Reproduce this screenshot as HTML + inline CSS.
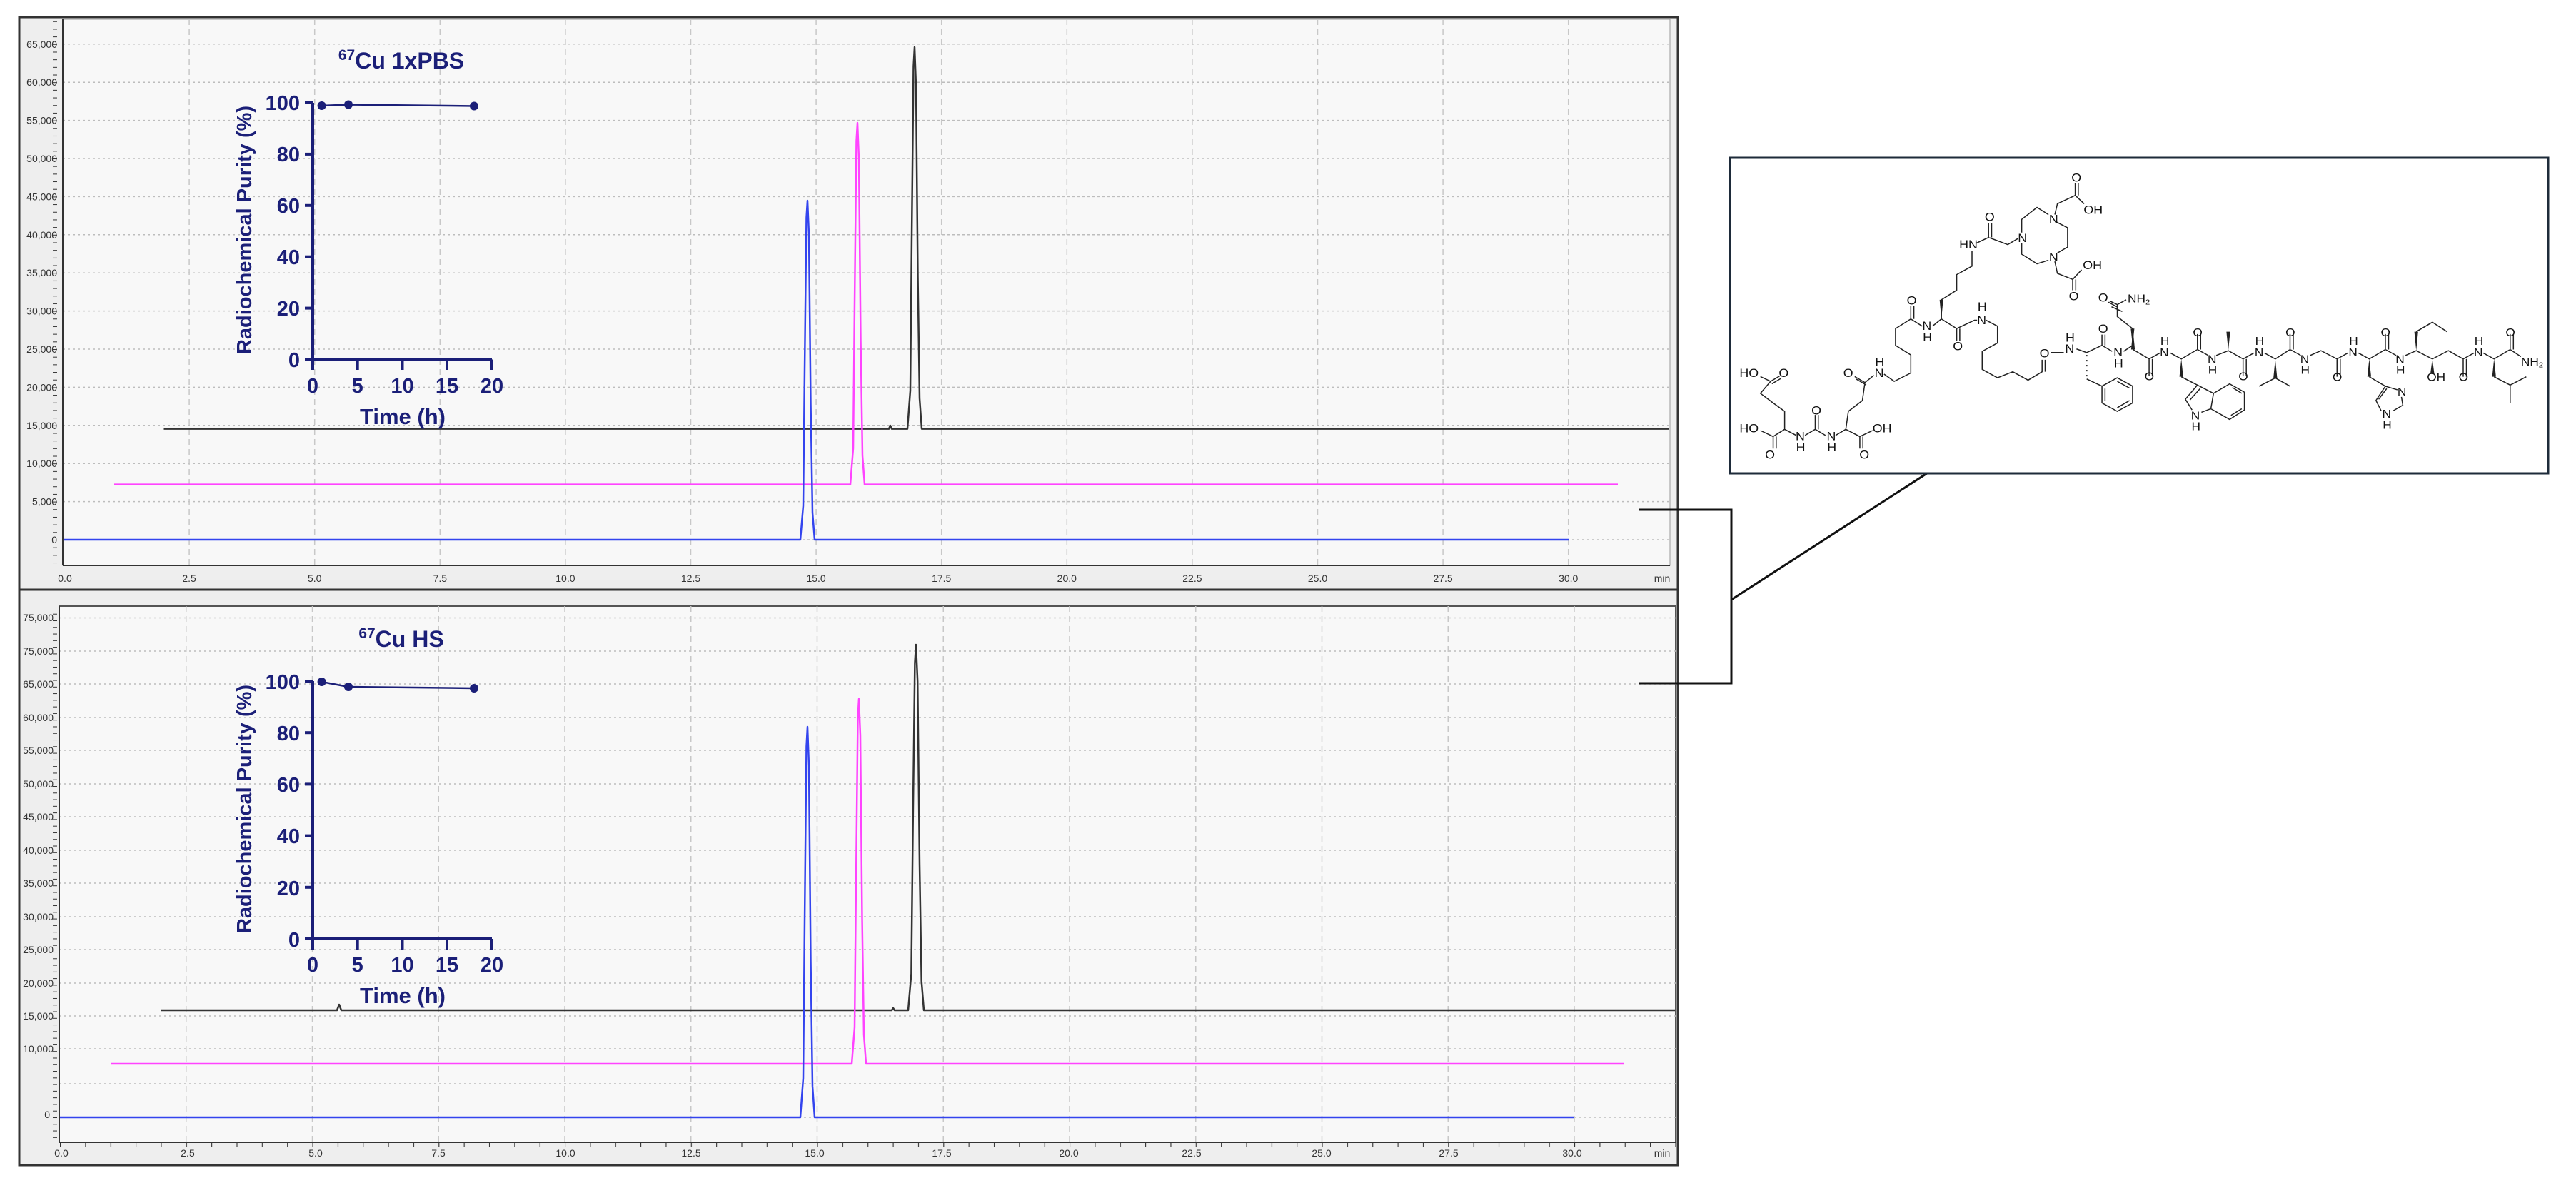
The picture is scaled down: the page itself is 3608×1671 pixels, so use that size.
<!DOCTYPE html>
<html><head><meta charset="utf-8"><style>
html,body{margin:0;padding:0;background:#fff;}
svg{display:block;}
.ax{font-family:"Liberation Sans",sans-serif;font-size:14px;fill:#333;}
.nv{font-family:"Liberation Sans",sans-serif;font-weight:bold;fill:#1b1f78;}
.m text{font-family:"Liberation Sans",sans-serif;fill:#111;}
</style></head><body>
<svg width="3608" height="1671" viewBox="0 0 3608 1671" xmlns="http://www.w3.org/2000/svg">
<defs>
<pattern id="yt1" x="0" y="756" width="20" height="10.68" patternUnits="userSpaceOnUse"><line x1="14" y1="0.5" x2="20" y2="0.5" stroke="#333" stroke-width="1"/></pattern>
<pattern id="xt1" x="89.5" y="0" width="35.12" height="20" patternUnits="userSpaceOnUse"><line x1="0.5" y1="0" x2="0.5" y2="6" stroke="#333" stroke-width="1.2"/></pattern>
<pattern id="yt2" x="0" y="1565" width="20" height="9.28" patternUnits="userSpaceOnUse"><line x1="14" y1="0.5" x2="20" y2="0.5" stroke="#333" stroke-width="1"/></pattern>
<pattern id="xt2" x="84" y="0" width="35.35" height="20" patternUnits="userSpaceOnUse"><line x1="0.5" y1="0" x2="0.5" y2="6" stroke="#333" stroke-width="1.2"/></pattern>
</defs>

<!-- TOP PANEL -->
<rect x="27" y="24" width="2323" height="802" fill="#eeeeee" stroke="#333" stroke-width="3"/>
<rect x="88" y="27" width="2251" height="765" fill="#f8f8f8" stroke="#999" stroke-width="1"/>
<g stroke="#bdbdbd" stroke-width="1.5" stroke-dasharray="3 4">
<line x1="88" x2="2339" y1="756" y2="756"/><line x1="88" x2="2339" y1="702.6" y2="702.6"/><line x1="88" x2="2339" y1="649.2" y2="649.2"/><line x1="88" x2="2339" y1="595.8" y2="595.8"/><line x1="88" x2="2339" y1="542.4" y2="542.4"/><line x1="88" x2="2339" y1="489" y2="489"/><line x1="88" x2="2339" y1="435.6" y2="435.6"/><line x1="88" x2="2339" y1="382.2" y2="382.2"/><line x1="88" x2="2339" y1="328.8" y2="328.8"/><line x1="88" x2="2339" y1="275.4" y2="275.4"/><line x1="88" x2="2339" y1="222" y2="222"/><line x1="88" x2="2339" y1="168.6" y2="168.6"/><line x1="88" x2="2339" y1="115.2" y2="115.2"/><line x1="88" x2="2339" y1="61.8" y2="61.8"/>
</g>
<g stroke="#c8c8c8" stroke-width="1.5" stroke-dasharray="8 6">
<line y1="27" y2="792" x1="265.1" x2="265.1"/><line y1="27" y2="792" x1="440.7" x2="440.7"/><line y1="27" y2="792" x1="616.3" x2="616.3"/><line y1="27" y2="792" x1="791.9" x2="791.9"/><line y1="27" y2="792" x1="967.5" x2="967.5"/><line y1="27" y2="792" x1="1143.1" x2="1143.1"/><line y1="27" y2="792" x1="1318.7" x2="1318.7"/><line y1="27" y2="792" x1="1494.3" x2="1494.3"/><line y1="27" y2="792" x1="1669.9" x2="1669.9"/><line y1="27" y2="792" x1="1845.5" x2="1845.5"/><line y1="27" y2="792" x1="2021.1" x2="2021.1"/><line y1="27" y2="792" x1="2196.7" x2="2196.7"/>
</g>
<rect x="68" y="27" width="20" height="765" fill="url(#yt1)"/>
<rect x="88" y="792" width="2251" height="8" fill="url(#xt1)"/>
<line x1="88" y1="27" x2="88" y2="792" stroke="#333" stroke-width="2"/>
<line x1="88" y1="792" x2="2339" y2="792" stroke="#333" stroke-width="2"/>
<g class="ax" text-anchor="end">
<text x="80" y="761">0</text><text x="80" y="707.6">5,000</text><text x="80" y="654.2">10,000</text><text x="80" y="600.8">15,000</text><text x="80" y="547.4">20,000</text><text x="80" y="494">25,000</text><text x="80" y="440.6">30,000</text><text x="80" y="387.2">35,000</text><text x="80" y="333.8">40,000</text><text x="80" y="280.4">45,000</text><text x="80" y="227">50,000</text><text x="80" y="173.6">55,000</text><text x="80" y="120.2">60,000</text><text x="80" y="66.8">65,000</text>
</g>
<g class="ax" text-anchor="middle">
<text x="91" y="815">0.0</text><text x="265.1" y="815">2.5</text><text x="440.7" y="815">5.0</text><text x="616.3" y="815">7.5</text><text x="791.9" y="815">10.0</text><text x="967.5" y="815">12.5</text><text x="1143.1" y="815">15.0</text><text x="1318.7" y="815">17.5</text><text x="1494.3" y="815">20.0</text><text x="1669.9" y="815">22.5</text><text x="1845.5" y="815">25.0</text><text x="2021.1" y="815">27.5</text><text x="2196.7" y="815">30.0</text><text x="2328" y="815">min</text>
</g>
<g fill="none" stroke-width="2.5" stroke-linejoin="round">
<path stroke="#333" d="M229.5 600.6 L1245 600.6 L1247 596 L1249 600.6 L1271 600.6 L1275 547 L1277 333 L1279.5 92.7 L1281 66 L1283 119.5 L1285.5 386.8 L1288 557.8 L1291 600.6 L2338 600.6"/>
<path stroke="#ff44ff" d="M160 678.6 L1191 678.6 L1195 628 L1197 425.3 L1199.5 197.3 L1201 172 L1203 222.7 L1205.5 476 L1208 638 L1211 678.6 L2266 678.6"/>
<path stroke="#3344ee" d="M89.5 756 L1121 756 L1125 708.5 L1127 518.5 L1129.5 304.8 L1131 281 L1133 328.5 L1135.5 566 L1138 718 L1141 756 L2197 756"/>
</g>
<!-- inset top -->
<g>
<text class="nv" x="562" y="96" text-anchor="middle" font-size="32"><tspan font-size="21" dy="-12">67</tspan><tspan dy="12">Cu 1xPBS</tspan></text>
<path d="M438 144 L438 503.5 L689 503.5" fill="none" stroke="#1b1f78" stroke-width="4"/>
<g stroke="#1b1f78" stroke-width="4">
<line x1="427" x2="438" y1="503.5" y2="503.5"/><line x1="427" x2="438" y1="431.6" y2="431.6"/><line x1="427" x2="438" y1="359.7" y2="359.7"/><line x1="427" x2="438" y1="287.8" y2="287.8"/><line x1="427" x2="438" y1="215.9" y2="215.9"/><line x1="427" x2="438" y1="144" y2="144"/>
<line x1="438" x2="438" y1="503.5" y2="518"/><line x1="500.7" x2="500.7" y1="503.5" y2="518"/><line x1="563.5" x2="563.5" y1="503.5" y2="518"/><line x1="626" x2="626" y1="503.5" y2="518"/><line x1="689" x2="689" y1="503.5" y2="518"/>
</g>
<polyline points="450.6,148 488,146.5 664,148.5" fill="none" stroke="#1b1f78" stroke-width="2.5"/>
<g fill="#1b1f78"><circle cx="450.6" cy="148" r="6"/><circle cx="488" cy="146.5" r="6"/><circle cx="664" cy="148.5" r="6"/></g>
<g class="nv" font-size="29" text-anchor="end"><text x="420" y="514">0</text><text x="420" y="442">20</text><text x="420" y="370">40</text><text x="420" y="298">60</text><text x="420" y="226">80</text><text x="420" y="154">100</text></g>
<g class="nv" font-size="29" text-anchor="middle"><text x="438" y="550">0</text><text x="500.7" y="550">5</text><text x="563.5" y="550">10</text><text x="626" y="550">15</text><text x="689" y="550">20</text></g>
<text class="nv" x="564" y="594" font-size="31" text-anchor="middle">Time (h)</text>
<text class="nv" font-size="29" text-anchor="middle" transform="translate(352,322) rotate(-90)">Radiochemical Purity (%)</text>
</g>

<!-- BOTTOM PANEL -->
<rect x="27" y="826" width="2323" height="806" fill="#eeeeee" stroke="#333" stroke-width="3"/>
<rect x="83" y="849" width="2264" height="751" fill="#f8f8f8" stroke="#555" stroke-width="2"/>
<g stroke="#bdbdbd" stroke-width="1.5" stroke-dasharray="3 4">
<line x1="83" x2="2347" y1="865.5" y2="865.5"/><line x1="83" x2="2347" y1="912" y2="912"/><line x1="83" x2="2347" y1="958" y2="958"/><line x1="83" x2="2347" y1="1005" y2="1005"/><line x1="83" x2="2347" y1="1051" y2="1051"/><line x1="83" x2="2347" y1="1098" y2="1098"/><line x1="83" x2="2347" y1="1144" y2="1144"/><line x1="83" x2="2347" y1="1191" y2="1191"/><line x1="83" x2="2347" y1="1237" y2="1237"/><line x1="83" x2="2347" y1="1284" y2="1284"/><line x1="83" x2="2347" y1="1330" y2="1330"/><line x1="83" x2="2347" y1="1377" y2="1377"/><line x1="83" x2="2347" y1="1423" y2="1423"/><line x1="83" x2="2347" y1="1469" y2="1469"/><line x1="83" x2="2347" y1="1518" y2="1518"/><line x1="83" x2="2347" y1="1565" y2="1565"/>
</g>
<g stroke="#c8c8c8" stroke-width="1.5" stroke-dasharray="8 6">
<line y1="849" y2="1600" x1="260.75" x2="260.75"/><line y1="849" y2="1600" x1="437.5" x2="437.5"/><line y1="849" y2="1600" x1="614.25" x2="614.25"/><line y1="849" y2="1600" x1="791" x2="791"/><line y1="849" y2="1600" x1="967.75" x2="967.75"/><line y1="849" y2="1600" x1="1144.5" x2="1144.5"/><line y1="849" y2="1600" x1="1321.25" x2="1321.25"/><line y1="849" y2="1600" x1="1498" x2="1498"/><line y1="849" y2="1600" x1="1674.75" x2="1674.75"/><line y1="849" y2="1600" x1="1851.5" x2="1851.5"/><line y1="849" y2="1600" x1="2028.25" x2="2028.25"/><line y1="849" y2="1600" x1="2205" x2="2205"/>
</g>
<rect x="63" y="851" width="20" height="749" fill="url(#yt2)"/>
<rect x="83" y="1600" width="2264" height="8" fill="url(#xt2)"/>
<line x1="83" y1="849" x2="83" y2="1600" stroke="#333" stroke-width="2"/>
<line x1="83" y1="1600" x2="2347" y2="1600" stroke="#333" stroke-width="2"/>
<g class="ax" text-anchor="end">
<text x="75" y="870">75,000</text><text x="75" y="917">75,000</text><text x="75" y="963">65,000</text><text x="75" y="1010">60,000</text><text x="75" y="1056">55,000</text><text x="75" y="1103">50,000</text><text x="75" y="1149">45,000</text><text x="75" y="1196">40,000</text><text x="75" y="1242">35,000</text><text x="75" y="1289">30,000</text><text x="75" y="1335">25,000</text><text x="75" y="1382">20,000</text><text x="75" y="1428">15,000</text><text x="75" y="1474">10,000</text><text x="70" y="1566">0</text>
</g>
<g class="ax" text-anchor="middle">
<text x="86" y="1620">0.0</text><text x="263" y="1620">2.5</text><text x="442" y="1620">5.0</text><text x="614" y="1620">7.5</text><text x="792" y="1620">10.0</text><text x="968" y="1620">12.5</text><text x="1141" y="1620">15.0</text><text x="1319" y="1620">17.5</text><text x="1497" y="1620">20.0</text><text x="1669" y="1620">22.5</text><text x="1851" y="1620">25.0</text><text x="2029" y="1620">27.5</text><text x="2202" y="1620">30.0</text><text x="2328" y="1620">min</text>
</g>
<g fill="none" stroke-width="2.5" stroke-linejoin="round">
<path stroke="#333" d="M226 1415 L472 1415 L475 1407 L478 1415 L1249 1415 L1251 1412 L1253 1415 L1272 1415 L1276.4 1363.8 L1278.6 1159 L1281.4 928.6 L1283 903 L1285.2 954.2 L1288 1210.2 L1290.7 1374 L1294 1415 L2346 1415"/>
<path stroke="#ff44ff" d="M155 1490 L1193 1490 L1197 1438.9 L1199 1234.5 L1201.5 1004.6 L1203 979 L1205 1030.1 L1207.5 1285.6 L1210 1449.1 L1213 1490 L2275 1490"/>
<path stroke="#3344ee" d="M84 1565 L1121 1565 L1125 1510.3 L1127 1291.5 L1129.5 1045.4 L1131 1018 L1133 1072.7 L1135.5 1346.2 L1138 1521.2 L1141 1565 L2205 1565"/>
</g>
<!-- inset bottom -->
<g>
<text class="nv" x="562" y="906" text-anchor="middle" font-size="32"><tspan font-size="21" dy="-12">67</tspan><tspan dy="12">Cu HS</tspan></text>
<path d="M438 954 L438 1315 L689 1315" fill="none" stroke="#1b1f78" stroke-width="4"/>
<g stroke="#1b1f78" stroke-width="4">
<line x1="427" x2="438" y1="1315" y2="1315"/><line x1="427" x2="438" y1="1242.8" y2="1242.8"/><line x1="427" x2="438" y1="1170.6" y2="1170.6"/><line x1="427" x2="438" y1="1098.4" y2="1098.4"/><line x1="427" x2="438" y1="1026.2" y2="1026.2"/><line x1="427" x2="438" y1="954" y2="954"/>
<line x1="438" x2="438" y1="1315" y2="1330"/><line x1="500.7" x2="500.7" y1="1315" y2="1330"/><line x1="563.5" x2="563.5" y1="1315" y2="1330"/><line x1="626" x2="626" y1="1315" y2="1330"/><line x1="689" x2="689" y1="1315" y2="1330"/>
</g>
<polyline points="450.6,955 488,962 664,964" fill="none" stroke="#1b1f78" stroke-width="2.5"/>
<g fill="#1b1f78"><circle cx="450.6" cy="955" r="6"/><circle cx="488" cy="962" r="6"/><circle cx="664" cy="964" r="6"/></g>
<g class="nv" font-size="29" text-anchor="end"><text x="420" y="1326">0</text><text x="420" y="1254">20</text><text x="420" y="1181">40</text><text x="420" y="1109">60</text><text x="420" y="1037">80</text><text x="420" y="965">100</text></g>
<g class="nv" font-size="29" text-anchor="middle"><text x="438" y="1361">0</text><text x="500.7" y="1361">5</text><text x="563.5" y="1361">10</text><text x="626" y="1361">15</text><text x="689" y="1361">20</text></g>
<text class="nv" x="564" y="1405" font-size="31" text-anchor="middle">Time (h)</text>
<text class="nv" font-size="29" text-anchor="middle" transform="translate(352,1133) rotate(-90)">Radiochemical Purity (%)</text>
</g>

<!-- connectors -->
<g stroke="#111" stroke-width="3" fill="none">
<path d="M2295 714 L2425 714 L2425 957 L2295 957"/>
<line x1="2425" y1="840" x2="2699" y2="663"/>
</g>
<rect x="2423" y="221" width="1146" height="442" fill="#fff" stroke="#1e2b3a" stroke-width="3"/>

<!-- molecule left part -->
<g class="m" transform="translate(2430,225) scale(0.357,0.336)">
<g fill="none" stroke="#222" stroke-width="1.5" vector-effect="non-scaling-stroke" stroke-linejoin="round">
<path vector-effect="non-scaling-stroke" d="M100 900 L140 920 L100 970 L150 1010 L195 1045 L195 1120 L150 1150 L100 1125 M150 1150 L150 1200 M162 1150 L162 1200 M140 920 L175 898 M145 930 L180 908 M195 1120 L240 1145 M275 1145 L315 1120 L355 1145 M315 1120 L315 1060 M327 1120 L327 1060 M395 1145 L435 1120 L490 1150 L540 1125 M490 1150 L490 1200 M502 1150 L502 1200 M435 1120 L445 1045 L500 1000 L510 925 L470 900 M515 935 L475 910 M510 925 L545 895 M585 890 L625 920 L690 885 L690 810 L630 770 L630 700 L690 660 L690 605 M702 660 L702 605 M690 660 L735 690 M775 690 L810 660 L870 700 L870 750 M882 700 L882 750 M870 700 L940 665 L950 665 M985 665 L1030 690 L1030 760 L970 795 L970 870 L1030 905 L1090 880 L1150 915 L1205 880 L1205 830 M1217 880 L1217 830 M1240 800 L1290 800 M1340 785 L1380 800 L1440 770 L1440 725 M1452 770 L1452 725 M1440 770 L1480 795 M1525 795 L1560 770 L1560 700 L1500 650 L1500 600 L1470 585 M1500 610 L1465 590 M1500 600 L1535 580 M810 660 L810 580 L870 540 L870 475 L930 440 L930 375 M945 345 L995 320 L995 260 M1007 320 L1007 260 M995 320 L1070 350 L1110 325 M1125 300 L1125 245 L1185 195 L1230 225 M1260 255 L1305 280 L1305 360 L1265 385 M1230 415 L1185 430 L1125 390 L1125 345 M1255 225 L1265 180 L1335 145 L1335 95 M1347 145 L1347 95 M1335 145 L1370 180 M1255 420 L1265 470 L1325 495 L1325 540 M1337 495 L1337 540 M1325 495 L1360 455"/>
<path vector-effect="non-scaling-stroke" d="M1440 940 L1500 905 L1560 940 L1560 1010 L1500 1045 L1440 1010 Z M1452 950 L1452 1000 M1500 1030 L1548 1000 M1500 920 L1548 948 M1380 910 L1440 940"/>
</g>
<path d="M810 660 L803 580 L817 580 Z M1560 770 L1553 700 L1567 700 Z" fill="#222"/>
<path d="M1380 810 L1380 905" stroke="#222" stroke-width="2" stroke-dasharray="2 5" vector-effect="non-scaling-stroke"/>
<g font-size="50">
<text x="18" y="902">HO</text><text x="172" y="902">O</text><text x="18" y="1132">HO</text><text x="118" y="1243">O</text><text x="238" y="1165">N</text><text x="240" y="1212">H</text><text x="300" y="1058">O</text><text x="360" y="1165">N</text><text x="362" y="1212">H</text><text x="540" y="1132">OH</text><text x="488" y="1243">O</text><text x="425" y="902">O</text><text x="548" y="902">N</text><text x="550" y="855">H</text><text x="674" y="600">O</text><text x="735" y="706">N</text><text x="737" y="753">H</text><text x="855" y="790">O</text><text x="880" y="366">HN</text><text x="980" y="252">O</text><text x="1110" y="340">N</text><text x="1232" y="260">N</text><text x="1232" y="420">N</text><text x="1320" y="88">O</text><text x="1368" y="222">OH</text><text x="1365" y="452">OH</text><text x="1310" y="582">O</text><text x="950" y="681">N</text><text x="952" y="625">H</text><text x="1195" y="820">O</text><text x="1295" y="800">N</text><text x="1297" y="755">H</text><text x="1425" y="718">O</text><text x="1485" y="815">N</text><text x="1487" y="862">H</text><text x="1425" y="588">O</text>
</g>
</g>

<!-- molecule right part -->
<g class="m" transform="translate(2980,360) scale(0.376,0.332)">
<g fill="none" stroke="#222" stroke-width="1.5" stroke-linejoin="round">
<path vector-effect="non-scaling-stroke" d="M-60 210 L-20 230 M20 390 L80 430 L80 500 M92 430 L92 500 M80 430 L120 405 M160 405 L200 430 L260 390 L260 325 M272 390 L272 325 M260 390 L300 415 M330 415 L375 395 L430 430 L430 500 M442 430 L442 500 M430 430 L470 405 M510 405 L550 430 L605 390 L605 325 M617 390 L617 325 M605 390 L645 415 M680 415 L720 395 L780 430 L780 505 M792 430 L792 505 M780 430 L820 405 M860 405 L900 430 L960 390 L960 325 M972 390 L972 325 M960 390 L1000 415 M1035 415 L1075 395 L1135 430 L1195 395 L1250 430 L1250 505 M1262 430 L1262 505 M1250 430 L1290 405 M1325 405 L1365 430 L1425 390 L1425 325 M1437 390 L1437 325 M1425 390 L1465 420 M1075 315 L1135 275 L1190 315 M1365 505 L1425 540 L1485 505 M1425 540 L1425 615 M550 510 L490 545 M550 510 L605 545 M200 505 L260 540 L215 600 L240 645 M275 655 L310 640 L320 575 L260 540 M320 575 L380 535 L435 570 L435 645 L380 685 L310 640 M390 550 L425 575 M425 640 L385 668 M270 555 L232 603 M900 505 L960 545 L1005 560 M1020 590 L1025 625 L990 648 M945 650 L925 605 L960 545 M935 600 L965 555"/>
</g>
<path d="M20 310 L13 390 L27 390 Z M375 395 L368 315 L382 315 Z M200 430 L193 505 L207 505 Z M550 430 L543 510 L557 510 Z M900 430 L893 505 L907 505 Z M1075 395 L1068 315 L1082 315 Z M1135 430 L1128 490 L1142 490 Z M1365 430 L1358 505 L1372 505 Z" fill="#222"/>
<g font-size="46">
<text x="0" y="192">NH<tspan font-size="30" dy="8">2</tspan></text>
<text x="63" y="520">O</text><text x="120" y="418">N</text><text x="122" y="370">H</text><text x="243" y="335">O</text><text x="298" y="448">N</text><text x="300" y="492">H</text><text x="413" y="520">O</text><text x="473" y="418">N</text><text x="475" y="370">H</text><text x="588" y="335">O</text><text x="643" y="448">N</text><text x="645" y="492">H</text><text x="763" y="522">O</text><text x="823" y="418">N</text><text x="825" y="370">H</text><text x="943" y="335">O</text><text x="998" y="448">N</text><text x="1000" y="492">H</text><text x="1115" y="522">OH</text><text x="1233" y="522">O</text><text x="1290" y="418">N</text><text x="1292" y="370">H</text><text x="1408" y="335">O</text><text x="1465" y="458">NH<tspan font-size="30" dy="8">2</tspan></text>
<text x="236" y="685">N</text><text x="238" y="730">H</text><text x="1005" y="585">N</text><text x="948" y="678">N</text><text x="950" y="725">H</text>
</g>
</g>
</svg>
</body></html>
